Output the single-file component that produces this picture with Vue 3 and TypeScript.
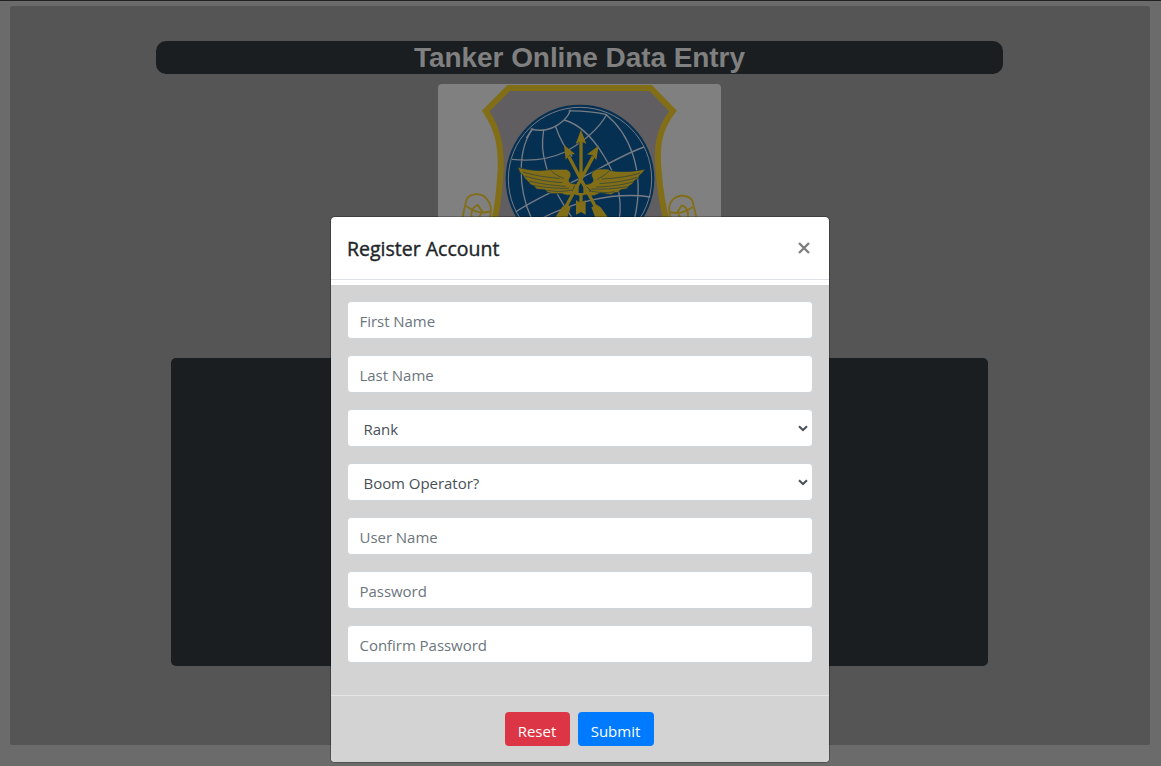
<script setup lang="ts">
import { ref } from 'vue'

interface Field {
  label: string
  kind: 'text' | 'password' | 'select'
}

const fields: Field[] = [
  { label: 'First Name', kind: 'text' },
  { label: 'Last Name', kind: 'text' },
  { label: 'Rank', kind: 'select' },
  { label: 'Boom Operator?', kind: 'select' },
  { label: 'User Name', kind: 'text' },
  { label: 'Password', kind: 'password' },
  { label: 'Confirm Password', kind: 'password' },
]

const values = ref<string[]>(fields.map(() => ''))

function reset(): void {
  values.value = fields.map(() => '')
}
</script>

<template>
  <div class="page">
    <main class="panel">
      <h1 class="title">Tanker Online Data Entry</h1>
      <svg class="crest" viewBox="24 18 849 420" width="283" height="140" aria-hidden="true">
        <rect x="24" y="18" width="849" height="480" rx="12" fill="#808080" />
        <path d="M236 30H662L729 99C681 160 680 217 686 280C690 335 697 380 712 440H190C206 380 209 325 212 275C213 212 208 158 167 99Z" fill="#615e62" stroke="#836e18" stroke-width="18" />
        <g fill="none" stroke="#836e18" stroke-width="5.5">
          <path d="M98 425C99 400 106 386 107 375C110 344 151 342 169 361C184 377 186 397 179 420M109 384C135 404 159 407 180 400M126 425C120 400 129 387 143 381L157 401L143 425" />
          <path d="M799 425C798 400 790 389 790 379C787 349 747 347 728 365C715 379 716 395 721 420M788 387C763 407 737 407 717 402M772 425C778 400 769 387 756 382L742 402L754 425" />
        </g>
        <circle cx="450" cy="303" r="223" fill="#053052" />
        <g fill="none" stroke="#767b84" stroke-width="4">
          <circle cx="450" cy="303" r="215" stroke-width="3" />
          <path d="M302 153C340 163 374 151 400 128C413 116 419 105 421 95M416 99C456 98 493 102 531 110M310 151C263 208 262 329 304 420M341 156C335 196 336 222 348 263C361 321 394 374 434 430M377 146C389 181 402 207 426 235M402 126C451 139 491 184 520 231C560 293 578 355 568 425M531 108C505 155 454 195 405 222C353 246 292 249 246 244M526 108C594 162 649 273 613 425M642 207C583 228 518 267 461 296C391 329 309 366 257 402M329 424C423 375 546 340 661 357M306 153L289 180" />
        </g>
        <g fill="#836e18" stroke="#053052" stroke-width="2" stroke-linejoin="round">
          <path d="M263 268C300 278 336 280 362 274H409C423 280 426 290 419 301C413 312 421 318 439 318L446 329C438 352 417 357 396 347H365L351 342L347 336L319 333L311 323L302 320L295 311L285 302L279 292L270 284Z" />
          <path d="M646 273C609 282 574 282 543 278L534 273H504C487 276 480 289 488 301C493 312 483 319 465 319L456 332C460 355 486 360 510 345L543 350L554 344L565 343L571 336L590 332L597 324L607 318L613 308L624 302L629 292L638 284Z" />
          <path d="M427 342L435 351L449 354L472 350L482 337L468 325H433Z" />
        </g>
        <g fill="none" stroke="#233f43" stroke-width="2">
          <path d="M278 282C312 292 345 298 389 301M285 294C316 304 351 311 397 314M298 309C329 317 363 322 407 325M313 323C342 328 379 332 417 331M351 337C378 342 401 341 427 336M361 275C374 292 389 294 402 302" />
          <path d="M631 285C596 296 556 301 515 303M622 298C590 309 552 314 508 317M608 312C575 321 542 326 498 327M592 326C555 332 521 335 484 333M554 341C528 346 503 343 474 338M538 277C525 294 514 295 500 306" />
        </g>
        <g stroke="#836e18" stroke-width="10" fill="#836e18">
          <path d="M453 188V345" stroke="#053052" stroke-width="14" />
          <path d="M453 188V296M453 350V376M416 235L500 393M490 235L404 393" />
          <path d="M453 155L469 198L453 190L437 198ZM402 201L435 228L419 231L407 245ZM506 203L499 246L488 232L471 229Z" stroke="none" />
          <path d="M438 366L453 376L467 366V410L453 402L438 410ZM397 386L413 380L422 388L408 430H368ZM484 388L501 380L512 388L542 430H500Z" stroke="none" />
        </g>
      </svg>
      <div class="entry"></div>
    </main>

    <section class="modal" role="dialog" aria-label="Register Account">
      <header class="modal-header">
        <h2>Register Account</h2>
        <button class="close" type="button" aria-label="Close">
          <svg width="12" height="12" viewBox="0 0 12 12"><path d="M1 1L11 11M11 1L1 11" fill="none" stroke="#7f7f7f" stroke-width="2.4" /></svg>
        </button>
      </header>
      <form class="modal-form" @submit.prevent>
        <div class="fields">
          <template v-for="(field, i) in fields" :key="field.label">
            <div v-if="field.kind === 'select'" class="select">
              <select v-model="values[i]" class="control" :aria-label="field.label">
                <option value="">{{ field.label }}</option>
              </select>
              <svg class="chevron" width="10" height="7" viewBox="0 0 10 7"><path d="M1 1.2L5 5L9 1.2" fill="none" stroke="#495057" stroke-width="2" /></svg>
            </div>
            <input v-else v-model="values[i]" class="control" :type="field.kind" :placeholder="field.label" />
          </template>
        </div>
        <footer class="modal-footer">
          <button class="btn reset" type="button" @click="reset">Reset</button>
          <button class="btn submit" type="submit">Submit</button>
        </footer>
      </form>
    </section>
  </div>
</template>

<style>
body {
  margin: 0;
  overflow: hidden;
}
</style>

<style scoped>
* {
  box-sizing: border-box;
}
.page {
  position: relative;
  height: 766px;
  padding: 5px 11px 0 10px;
  border-top: 1px solid #212122;
  background: #6b6b6b;
  font-family: "Segoe UI", "Open Sans", "Noto Sans", sans-serif;
  overflow: hidden;
}
.panel {
  display: flex;
  flex-direction: column;
  align-items: center;
  height: 739px;
  padding: 35px 1px 0 0;
  border-radius: 2px;
  background: #555;
}
.title {
  width: 847px;
  height: 33px;
  margin: 0 0 10px;
  border-radius: 10px;
  background: #1a1e21;
  color: #808080;
  font: bold 28px/33px "Liberation Sans", Arial, sans-serif;
  letter-spacing: -0.07px;
  text-align: center;
}
.crest {
  display: block;
  flex: none;
}
.entry {
  width: 817px;
  height: 308px;
  margin-top: 134px;
  border-radius: 5px;
  background: #1a1e21;
}
.modal {
  position: absolute;
  top: 215px;
  left: 330px;
  width: 500px;
  height: 547px;
  border: 1px solid rgba(0, 0, 0, 0.25);
  border-radius: 5px;
  background: #fff;
  background-clip: padding-box;
  overflow: hidden;
}
.modal-header {
  display: flex;
  justify-content: space-between;
  height: 63px;
  padding: 0 19px 0 16px;
  border-bottom: 1px solid #dee2e6;
}
.modal-header h2 {
  margin: 0;
  color: #212529;
  font-size: 19.5px;
  font-weight: 400;
  line-height: 64px;
  -webkit-text-stroke: 0.4px #212529;
}
.close {
  height: 12px;
  margin: 25px 0 0;
  padding: 0;
  border: 0;
  background: none;
}
.close svg {
  display: block;
}
.modal-form {
  height: 477px;
  margin-top: 5px;
  background: #d3d3d3;
}
.fields {
  display: flex;
  flex-direction: column;
  gap: 16px;
  height: 410px;
  padding: 16px 16px 0;
}
.control {
  width: 100%;
  height: 38px;
  padding: 8px 12px 6px 11.5px;
  border: 1px solid #ced4da;
  border-radius: 4px;
  background-color: #fff;
  color: #495057;
  font-family: inherit;
  font-size: 15px;
  letter-spacing: -0.04px;
  line-height: 22px;
}
.select {
  display: grid;
  align-items: center;
}
.select > * {
  grid-area: 1 / 1;
}
select.control {
  padding-left: 15.5px;
  appearance: none;
}
.chevron {
  justify-self: end;
  margin-right: 5px;
  pointer-events: none;
}
.control::placeholder {
  color: #6c757d;
  opacity: 1;
}
.modal-footer {
  display: flex;
  justify-content: center;
  gap: 8px;
  height: 67px;
  padding: 16px 2px 0 0;
  border-top: 1px solid #e3e5e6;
}
.btn {
  height: 34px;
  padding: 4px 0 0;
  border: 0;
  border-radius: 4px;
  color: #fff;
  font-family: inherit;
  font-size: 15px;
  line-height: 30px;
}
.reset {
  width: 65px;
  background: #dc3545;
}
.submit {
  width: 76px;
  background: #007bff;
}
</style>
